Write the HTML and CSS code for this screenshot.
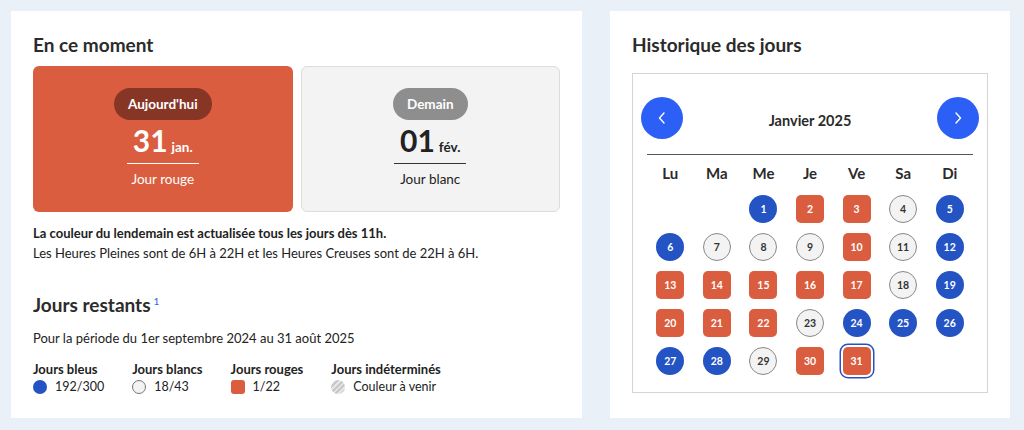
FILE: index.html
```html
<!DOCTYPE html>
<html lang="fr">
<head>
<meta charset="utf-8">
<title>Tempo</title>
<link rel="stylesheet" href="styles.css">
</head>
<body>
<main class="page">
  <section class="panel panel-now">
    <h2 class="panel-title">En ce moment</h2>
    <div class="day-cards">
      <div class="day-card day-card-red">
        <span class="day-badge badge-red">Aujourd'hui</span>
        <div class="day-date"><span class="day-num">31</span><span class="day-month">jan.</span></div>
        <div class="day-rule"></div>
        <div class="day-label">Jour rouge</div>
      </div>
      <div class="day-card day-card-white">
        <span class="day-badge badge-grey">Demain</span>
        <div class="day-date"><span class="day-num">01</span><span class="day-month">fév.</span></div>
        <div class="day-rule"></div>
        <div class="day-label">Jour blanc</div>
      </div>
    </div>
    <p class="info"><strong>La couleur du lendemain est actualisée tous les jours dès 11h.</strong><br>Les Heures Pleines sont de 6H à 22H et les Heures Creuses sont de 22H à 6H.</p>
    <h2 class="panel-title remaining-title">Jours restants<sup class="note">1</sup></h2>
    <p class="period">Pour la période du 1er septembre 2024 au 31 août 2025</p>
    <div class="legend">
      <div class="legend-item">
        <div class="legend-label">Jours bleus</div>
        <div class="legend-value"><span class="swatch swatch-blue"></span>192/300</div>
      </div>
      <div class="legend-item">
        <div class="legend-label">Jours blancs</div>
        <div class="legend-value"><span class="swatch swatch-white"></span>18/43</div>
      </div>
      <div class="legend-item">
        <div class="legend-label">Jours rouges</div>
        <div class="legend-value"><span class="swatch swatch-red"></span>1/22</div>
      </div>
      <div class="legend-item">
        <div class="legend-label">Jours indéterminés</div>
        <div class="legend-value"><span class="swatch swatch-none"></span>Couleur à venir</div>
      </div>
    </div>
  </section>

  <section class="panel panel-history">
    <h2 class="panel-title">Historique des jours</h2>
    <div class="calendar">
      <div class="cal-head">
        <button class="cal-nav" aria-label="Mois précédent">
          <svg width="10" height="14" viewBox="0 0 10 14"><polyline points="7,2 2.5,7 7,12" fill="none" stroke="#fff" stroke-width="1.4" stroke-linecap="round" stroke-linejoin="round"/></svg>
        </button>
        <div class="cal-month">Janvier 2025</div>
        <button class="cal-nav" aria-label="Mois suivant">
          <svg width="10" height="14" viewBox="0 0 10 14"><polyline points="3,2 7.5,7 3,12" fill="none" stroke="#fff" stroke-width="1.4" stroke-linecap="round" stroke-linejoin="round"/></svg>
        </button>
      </div>
      <div class="cal-rule"></div>
      <div class="cal-grid">
        <div class="cal-dow">Lu</div><div class="cal-dow">Ma</div><div class="cal-dow">Me</div><div class="cal-dow">Je</div><div class="cal-dow">Ve</div><div class="cal-dow">Sa</div><div class="cal-dow">Di</div>

        <div class="cal-cell"></div><div class="cal-cell"></div>
        <div class="cal-cell"><span class="d d-blue">1</span></div>
        <div class="cal-cell"><span class="d d-red">2</span></div>
        <div class="cal-cell"><span class="d d-red">3</span></div>
        <div class="cal-cell"><span class="d d-white">4</span></div>
        <div class="cal-cell"><span class="d d-blue">5</span></div>

        <div class="cal-cell"><span class="d d-blue">6</span></div>
        <div class="cal-cell"><span class="d d-white">7</span></div>
        <div class="cal-cell"><span class="d d-white">8</span></div>
        <div class="cal-cell"><span class="d d-white">9</span></div>
        <div class="cal-cell"><span class="d d-red">10</span></div>
        <div class="cal-cell"><span class="d d-white">11</span></div>
        <div class="cal-cell"><span class="d d-blue">12</span></div>

        <div class="cal-cell"><span class="d d-red">13</span></div>
        <div class="cal-cell"><span class="d d-red">14</span></div>
        <div class="cal-cell"><span class="d d-red">15</span></div>
        <div class="cal-cell"><span class="d d-red">16</span></div>
        <div class="cal-cell"><span class="d d-red">17</span></div>
        <div class="cal-cell"><span class="d d-white">18</span></div>
        <div class="cal-cell"><span class="d d-blue">19</span></div>

        <div class="cal-cell"><span class="d d-red">20</span></div>
        <div class="cal-cell"><span class="d d-red">21</span></div>
        <div class="cal-cell"><span class="d d-red">22</span></div>
        <div class="cal-cell"><span class="d d-white">23</span></div>
        <div class="cal-cell"><span class="d d-blue">24</span></div>
        <div class="cal-cell"><span class="d d-blue">25</span></div>
        <div class="cal-cell"><span class="d d-blue">26</span></div>

        <div class="cal-cell"><span class="d d-blue">27</span></div>
        <div class="cal-cell"><span class="d d-blue">28</span></div>
        <div class="cal-cell"><span class="d d-white">29</span></div>
        <div class="cal-cell"><span class="d d-red">30</span></div>
        <div class="cal-cell"><span class="d d-red d-today">31</span></div>
        <div class="cal-cell"></div><div class="cal-cell"></div>
      </div>
    </div>
  </section>
</main>
</body>
</html>
```

FILE: styles.css
```css
* { box-sizing: border-box; }
html, body { margin: 0; padding: 0; }
body {
  background: #e9f0f8;
  font-family: "Lato", "Noto Sans", sans-serif;
  color: #222;
}
.page {
  display: flex;
  gap: 28px;
  padding: 11px;
}
.panel {
  background: #fff;
  height: 407px;
  padding: 22px;
}
.panel-now { width: 571px; }
.panel-history { width: 400px; }
.panel-title {
  margin: 0;
  font-size: 19px;
  line-height: 24px;
  font-weight: 700;
  color: #2b2b2b;
}
.day-cards {
  display: flex;
  gap: 8px;
  margin-top: 9px;
}
.day-card {
  width: 260px;
  height: 146px;
  border-radius: 6px;
  display: flex;
  flex-direction: column;
  align-items: center;
  padding-top: 22px;
}
.day-card-red { background: #d95d3e; color: #fff; }
.day-card-white { background: #f3f3f3; border: 1px solid #dcdcdc; padding-top: 21px; color: #222; }
.day-badge {
  height: 32px;
  line-height: 32px;
  padding: 0 14px;
  border-radius: 16px;
  font-size: 13.5px;
  font-weight: 700;
  color: #fff;
}
.badge-red { background: #873524; }
.badge-grey { background: #8e8e8e; }
.day-date {
  display: flex;
  align-items: baseline;
  margin-top: 3px;
  height: 34px;
}
.day-num { font-size: 30px; line-height: 34px; font-weight: 700; }
.day-month { font-size: 13.5px; font-weight: 700; margin-left: 4px; }
.day-rule { width: 72px; height: 1px; margin-top: 6px; }
.day-card-red .day-rule { background: #fff; }
.day-card-white .day-rule { background: #333; }
.day-label { font-size: 13.5px; line-height: 18px; margin-top: 6px; }

.info {
  margin: 11px 0 0;
  font-size: 13px;
  line-height: 20px;
  color: #222;
}
.info strong { font-weight: 700; }
.remaining-title { margin-top: 30px; }
.note {
  font-size: 10px;
  font-weight: 400;
  color: #2b5ff5;
  vertical-align: top;
  position: relative;
  top: -4px;
  margin-left: 3px;
}
.period {
  margin: 11px 0 0;
  font-size: 13px;
  line-height: 20px;
}
.legend {
  display: flex;
  gap: 28px;
  margin-top: 12px;
}
.legend-label { font-size: 13px; font-weight: 700; line-height: 18px; }
.legend-value {
  display: flex;
  align-items: center;
  font-size: 12.5px;
  line-height: 18px;
}
.swatch {
  width: 14px;
  height: 14px;
  margin-right: 8px;
  flex: none;
}
.swatch-blue { background: #2453c3; border-radius: 50%; }
.swatch-white { background: #f3f3f3; border: 1px solid #777; border-radius: 50%; }
.swatch-red { background: #d95d3e; border-radius: 3px; }
.swatch-none {
  border-radius: 50%;
  background: repeating-linear-gradient(135deg, #c8c8c8 0 2px, #e6e6e6 2px 4px);
}

.calendar {
  margin-top: 16px;
  border: 1px solid #d5d5d5;
  height: 320px;
  padding: 23px 8px 0;
}
.cal-head {
  display: flex;
  align-items: center;
  justify-content: space-between;
}
.cal-nav {
  width: 42px;
  height: 42px;
  border-radius: 50%;
  border: 0;
  background: #2b5ff5;
  display: flex;
  align-items: center;
  justify-content: center;
  padding: 0;
}
.cal-month { font-size: 14.5px; font-weight: 700; color: #2b2b2b; margin-top: 4px; }
.cal-rule {
  height: 1px;
  background: #555;
  margin: 15px 6px 0;
}
.cal-grid {
  display: grid;
  grid-template-columns: repeat(7, 1fr);
  grid-auto-rows: 28px;
  grid-template-rows: 24px;
  row-gap: 10px;
  margin: 6px 6px 0;
}
.cal-dow {
  text-align: center;
  font-size: 15px;
  font-weight: 700;
  line-height: 24px;
  color: #2b2b2b;
}
.cal-cell {
  display: flex;
  justify-content: center;
  align-items: center;
}
.d {
  width: 28px;
  height: 28px;
  display: flex;
  align-items: center;
  justify-content: center;
  font-size: 10.5px;
  font-weight: 700;
}
.d-blue { background: #2453c3; color: #fff; border-radius: 50%; }
.d-red { background: #d95d3e; color: #fff; border-radius: 5px; }
.d-white { background: #f3f3f3; color: #333; border: 1px solid #888; border-radius: 50%; }
.d-today { box-shadow: 0 0 0 2px #fff, 0 0 0 3.5px #2453c3; border-radius: 5px; }
```
